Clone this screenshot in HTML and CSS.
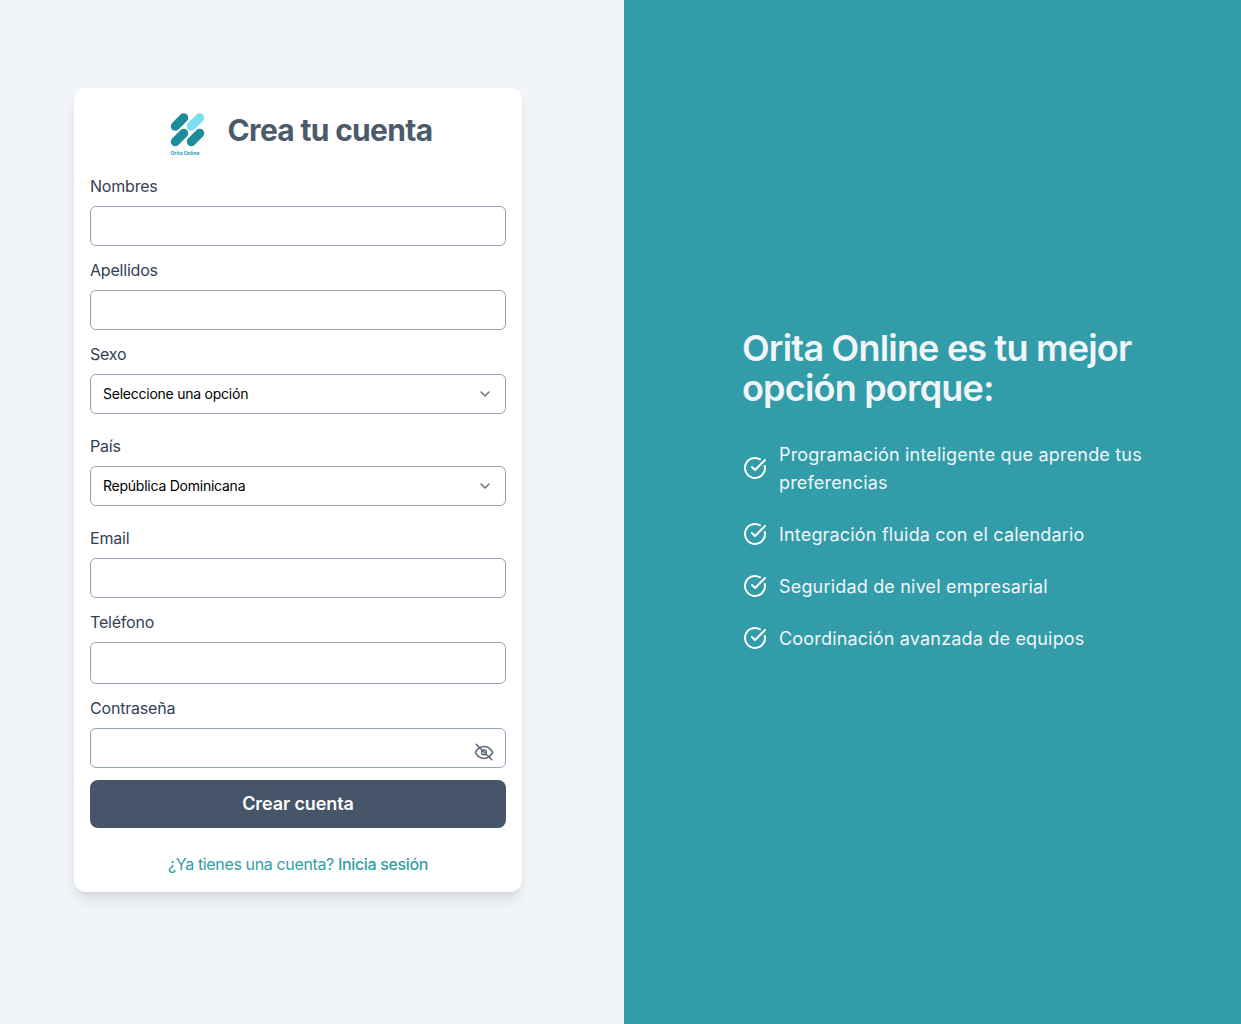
FILE: index.html
```html
<!DOCTYPE html>
<html lang="es">

<head>
    <meta charset="UTF-8">
    <meta name="viewport" content="width=device-width, initial-scale=1.0">
    <title>Crea tu cuenta</title>
    <link rel="stylesheet" href="styles.css">
</head>

<body>
    <div class="page">
        <!-- Formulario -->
        <main class="left-panel">
            <div class="card">
                <div class="card-header">
                    <svg class="logo" viewBox="0 0 40 46" aria-hidden="true">
                        <rect class="logo-dark" x="2" y="7.5" width="21" height="9" rx="4.5" transform="rotate(-45 12.5 12)" />
                        <rect class="logo-light" x="18" y="7.5" width="21" height="9" rx="4.5" transform="rotate(-45 28.5 12)" />
                        <rect class="logo-dark" x="2" y="23" width="21" height="9" rx="4.5" transform="rotate(-45 12.5 27.5)" />
                        <rect class="logo-dark" x="18" y="23" width="21" height="9" rx="4.5" transform="rotate(-45 28.5 27.5)" />
                        <text class="logo-text" x="18" y="45" text-anchor="middle">Orita Online</text>
                    </svg>
                    <h1 class="card-title">Crea tu cuenta</h1>
                </div>

                <form class="form">
                    <div class="field">
                        <label class="label" for="nombres">Nombres</label>
                        <input class="input" id="nombres" type="text">
                    </div>
                    <div class="field">
                        <label class="label" for="apellidos">Apellidos</label>
                        <input class="input" id="apellidos" type="text">
                    </div>
                    <div class="field field-select">
                        <label class="label" for="sexo">Sexo</label>
                        <div class="select-wrap">
                            <select class="input select" id="sexo">
                                <option>Seleccione una opción</option>
                                <option>Femenino</option>
                                <option>Masculino</option>
                            </select>
                            <svg class="chevron" viewBox="0 0 20 20" aria-hidden="true">
                                <path d="M6 8l4 4 4-4" />
                            </svg>
                        </div>
                    </div>
                    <div class="field field-select">
                        <label class="label" for="pais">País</label>
                        <div class="select-wrap">
                            <select class="input select" id="pais">
                                <option>República Dominicana</option>
                                <option>México</option>
                                <option>Colombia</option>
                            </select>
                            <svg class="chevron" viewBox="0 0 20 20" aria-hidden="true">
                                <path d="M6 8l4 4 4-4" />
                            </svg>
                        </div>
                    </div>
                    <div class="field">
                        <label class="label" for="email">Email</label>
                        <input class="input" id="email" type="email">
                    </div>
                    <div class="field">
                        <label class="label" for="telefono">Teléfono</label>
                        <input class="input input-tall" id="telefono" type="tel">
                    </div>
                    <div class="field">
                        <label class="label" for="clave">Contraseña</label>
                        <div class="password-wrap">
                            <input class="input" id="clave" type="password">
                            <svg class="eye" viewBox="0 0 24 24" aria-hidden="true">
                                <path d="M2.5 12.5c2.2-4 5.6-6.5 9.5-6.5s7.3 2.5 9.5 6.5c-2.2 4-5.6 6.5-9.5 6.5s-7.3-2.5-9.5-6.5z" />
                                <circle cx="12" cy="12.5" r="2.6" />
                                <path d="M3.5 3.5l17 17" />
                            </svg>
                        </div>
                    </div>
                    <button class="submit" type="button">Crear cuenta</button>
                </form>

                <p class="signin">¿Ya tienes una cuenta? <a class="signin-link" href="#">Inicia sesión</a></p>
            </div>
        </main>

        <!-- Panel de beneficios -->
        <aside class="right-panel">
            <h2 class="right-title">Orita Online es tu mejor opción porque:</h2>
            <ul class="benefits">
                <li class="benefit">
                    <svg class="check" viewBox="0 0 24 24" aria-hidden="true">
                        <path d="M21.8 10A10 10 0 1 1 17 3.3" />
                        <path d="M9 11l3 3L22 4" />
                    </svg>
                    <span>Programación inteligente que aprende tus preferencias</span>
                </li>
                <li class="benefit">
                    <svg class="check" viewBox="0 0 24 24" aria-hidden="true">
                        <path d="M21.8 10A10 10 0 1 1 17 3.3" />
                        <path d="M9 11l3 3L22 4" />
                    </svg>
                    <span>Integración fluida con el calendario</span>
                </li>
                <li class="benefit">
                    <svg class="check" viewBox="0 0 24 24" aria-hidden="true">
                        <path d="M21.8 10A10 10 0 1 1 17 3.3" />
                        <path d="M9 11l3 3L22 4" />
                    </svg>
                    <span>Seguridad de nivel empresarial</span>
                </li>
                <li class="benefit">
                    <svg class="check" viewBox="0 0 24 24" aria-hidden="true">
                        <path d="M21.8 10A10 10 0 1 1 17 3.3" />
                        <path d="M9 11l3 3L22 4" />
                    </svg>
                    <span>Coordinación avanzada de equipos</span>
                </li>
            </ul>
        </aside>
    </div>
</body>

</html>
```

FILE: styles.css
```css
* {
    box-sizing: border-box;
}

body {
    margin: 0;
    font-family: "Inter", "Liberation Sans", sans-serif;
    color: #334155;
}

.page {
    display: grid;
    grid-template-columns: 624px 1fr;
    height: 1024px;
    overflow: hidden;
}

/* Lado izquierdo */
.left-panel {
    background-color: #f1f5f9;
    padding: 88px 0 0 74px;
}

.card {
    width: 448px;
    height: 804px;
    padding: 16px;
    background-color: #fff;
    border-radius: 12px;
    box-shadow: 0 10px 15px -3px rgba(0, 0, 0, 0.1), 0 4px 6px -4px rgba(0, 0, 0, 0.1);
}

.card-header {
    display: flex;
    justify-content: center;
    align-items: center;
    gap: 21px;
    height: 52px;
    margin-bottom: 18px;
    padding-left: 3px;
}

.logo {
    width: 40px;
    height: 46px;
    margin-top: 5px;
}

.logo-dark {
    fill: #1c8e9b;
}

.logo-light {
    fill: #79e0f0;
}

.logo-text {
    font-size: 5px;
    font-weight: 700;
    fill: #2aa3b0;
}

.card-title {
    margin: 0;
    font-size: 30px;
    line-height: 36px;
    font-weight: 700;
    letter-spacing: -0.7px;
    color: #4b5b6b;
}

/* Formulario */
.form {
    display: flex;
    flex-direction: column;
}

.field {
    margin-bottom: 12px;
}

.field-select {
    margin-bottom: 20px;
}

.label {
    display: block;
    margin-bottom: 8px;
    font-size: 16px;
    line-height: 24px;
    letter-spacing: -0.2px;
    color: #334155;
}

.input {
    display: block;
    width: 100%;
    height: 40px;
    padding: 0 12px;
    background-color: #fff;
    border: 1px solid #94a3b8;
    border-radius: 6px;
    font-family: inherit;
    font-size: 14px;
    letter-spacing: -0.24px;
    color: #000;
}

.input-tall {
    height: 42px;
}

.select-wrap,
.password-wrap {
    position: relative;
}

.select {
    appearance: none;
    outline: none;
    padding-bottom: 2px;
}

.chevron {
    position: absolute;
    top: 10px;
    right: 11px;
    width: 20px;
    height: 20px;
    fill: none;
    stroke: #6b7280;
    stroke-width: 1.5;
    stroke-linecap: round;
    stroke-linejoin: round;
    pointer-events: none;
}

.eye {
    position: absolute;
    top: 13px;
    right: 11px;
    width: 22px;
    height: 22px;
    fill: none;
    stroke: #5b6776;
    stroke-width: 1.6;
    stroke-linecap: round;
    stroke-linejoin: round;
}

.submit {
    height: 48px;
    padding: 0 0 1px;
    background-color: #475569;
    border: none;
    border-radius: 8px;
    font-family: inherit;
    font-size: 18px;
    font-weight: 600;
    letter-spacing: -0.1px;
    color: #fff;
    cursor: pointer;
}

.signin {
    margin: 24px 0 0;
    text-align: center;
    font-size: 16px;
    line-height: 24px;
    letter-spacing: -0.36px;
    color: #329da8;
}

.signin-link {
    font-weight: 500;
    color: #329da8;
    text-decoration: none;
}

/* Lado derecho */
.right-panel {
    background-color: #329da8;
    padding: 328px 0 0 119px;
    color: #fff;
}

.right-title {
    width: 416px;
    margin: 0 0 32px -1px;
    font-size: 36px;
    line-height: 40px;
    font-weight: 600;
    letter-spacing: -0.8px;
    color: #f1f5f9;
}

.benefits {
    width: 416px;
    margin: 0;
    padding: 0;
    list-style: none;
}

.benefit {
    display: flex;
    align-items: center;
    gap: 12px;
    margin-bottom: 24px;
    font-size: 18px;
    line-height: 28px;
    letter-spacing: 0.18px;
    color: #f1f5f9;
}

.benefit span {
    position: relative;
    top: 1px;
}

.check {
    flex-shrink: 0;
    width: 24px;
    height: 24px;
    fill: none;
    stroke: #fff;
    stroke-width: 2;
    stroke-linecap: round;
    stroke-linejoin: round;
}
```
